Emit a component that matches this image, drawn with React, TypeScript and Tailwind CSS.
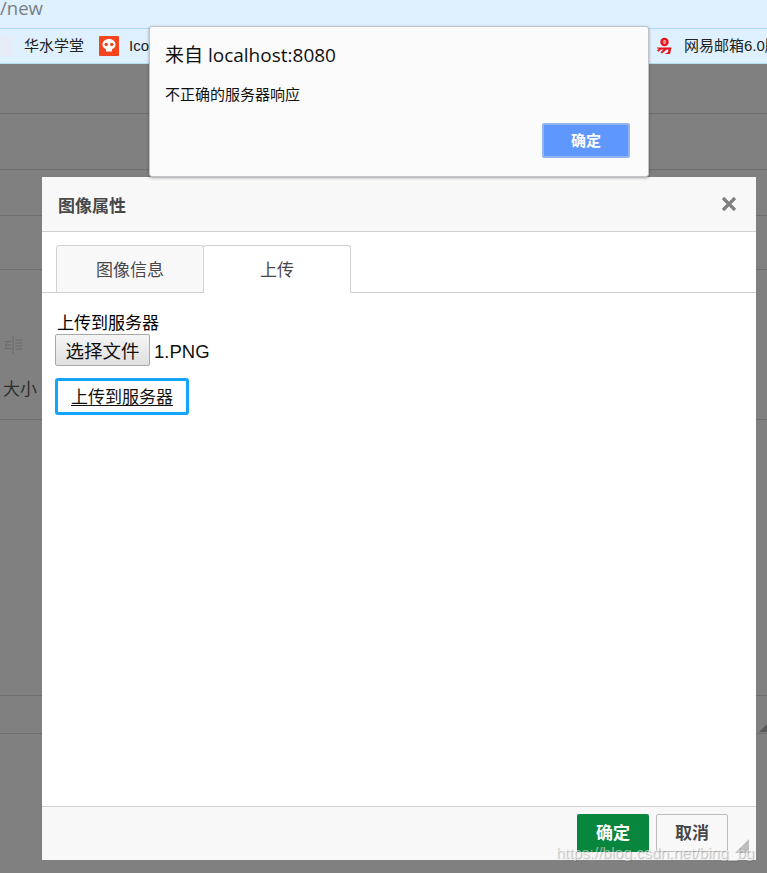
export default function App() {
  const cjk = "font-['Liberation_Sans','Noto_Sans_CJK_SC',sans-serif]";
  return (
    <div className={`relative w-[767px] h-[873px] overflow-hidden bg-[#808080] ${cjk}`}>
      {/* page behind the overlay */}
      <div className="h-[28px] bg-[#dff0fe] border-b border-[#a9dcf9] box-content">
        <div className="text-[18.5px] leading-[15px] text-[#7a7f85] font-['Open_Sans',sans-serif]">/new</div>
      </div>
      <div className="h-[35px] bg-[#dff0fe] border-b border-[#b5dcf5] flex items-center text-[15px] text-[#222]">
        <div className="w-[14px] h-[20px] bg-[#e6ecf8]" />
        <span className="ml-[10px]">华水学堂</span>
        <svg className="ml-[15px]" width="20" height="20" viewBox="0 0 20 20">
          <rect width="20" height="20" rx="1" fill="#f4451e" />
          <path d="M10 3c-4 0-6.500 2.500-6.500 5.500 0 2.500 1.500 4 3.500 4.700V15.500h6v-2.300c2-.7 3.500-2.200 3.500-4.700C16.500 5.500 14 3 10 3z" fill="#fff" />
          <circle cx="7.200" cy="8.500" r="1.700" fill="#f4451e" />
          <circle cx="12.800" cy="8.500" r="1.700" fill="#f4451e" />
        </svg>
        <span className="ml-[10px]">Icon</span>
        <div className="flex-1" />
        <svg width="17" height="18" viewBox="0 0 17 18" className="mr-[11px]">
          <circle cx="8.500" cy="5" r="4.200" fill="#e8141c" />
          <circle cx="8.500" cy="5" r="1.800" fill="#fff" />
          <path d="M5.500 5H11" stroke="#e8141c" strokeWidth="1" />
          <path d="M1 10.500h14.500l-1.500 6.500H8.500l3.500-1.800.5-2.700h-1.800L6 16.500l-1.500-1.200 3-2.800H5l-2.500 2.300L1 13.500l2-2H1z" fill="#e8141c" />
        </svg>
        <span className="w-[83px] whitespace-nowrap overflow-hidden">网易邮箱6.0版</span>
      </div>
      <div className="h-[50px] border-b border-[#6e6e6e]" />
      <div className="h-[56px] border-b border-[#6e6e6e]" />
      <div className="h-[46px] border-b border-[#6e6e6e]" />
      <div className="h-[54px] border-b border-[#6e6e6e]" />
      <div className="h-[150px] border-b border-[#6e6e6e] flex flex-col">
        <svg className="ml-[3px] mt-[65px]" width="21" height="20" viewBox="0 0 21 20" stroke="#6a6a6a" fill="none">
          <path d="M10 1v18M12.500 5h7M12.500 8h7M12.500 11h7M12.500 14h7M1 6.500h7M1 13.500h7M8 10H2M4.500 7.500L2 10l2.500 2.500" />
        </svg>
        <span className="ml-[3px] mt-[23px] text-[17px] leading-[24px] text-[#2f2f2f]">大小</span>
      </div>
      <div className="h-[276px] border-b border-[#6e6e6e]" />
      <div className="h-[38px] border-b border-[#6e6e6e] flex justify-end items-end">
        <div className="w-0 h-0 border-l-[8px] border-l-transparent border-b-[8px] border-b-[#5a5a5a] mb-[1px]" />
      </div>

      {/* image properties dialog */}
      <div className="absolute left-[42px] top-[177px] w-[714px] h-[683px] bg-white flex flex-col">
        <div className="h-[55px] shrink-0 bg-[#f8f8f8] border-b border-[#d1d1d1] flex items-center justify-between pl-[16px] pr-[19px]">
          <span className="text-[17px] leading-[24px] pt-[5px] font-bold text-[#484848]">图像属性</span>
          <svg width="16" height="16" viewBox="0 0 16 16" stroke="#808080" strokeWidth="3.200">
            <path d="M2 2l12 12M14 2L2 14" />
          </svg>
        </div>
        <div className="mt-[13px] h-[48px] shrink-0 border-b border-[#d1d1d1] flex pl-[14px]">
          <div className="w-[148px] h-[48px] bg-[#f8f8f8] border border-[#d1d1d1] rounded-t-[3px] flex items-center justify-center pt-[3px] text-[17px] text-[#484848]">
            图像信息
          </div>
          <div className="ml-[-1px] w-[148px] h-[48px] bg-white border border-b-0 border-[#d1d1d1] rounded-t-[3px] flex items-center justify-center pt-[2px] text-[17px] text-[#484848]">
            上传
          </div>
        </div>
        <div className="flex-1 pl-[14px] pt-[20px] text-black">
          <div className="text-[17px] leading-[21px] ml-[1px] whitespace-nowrap">上传到服务器</div>
          <div className="flex items-center ml-[-1px]">
            <div className="w-[95px] h-[32px] border border-[#a8a8a8] rounded-[2px] bg-gradient-to-b from-[#f5f5f5] to-[#e0e0e0] flex items-center justify-center pt-[3px] text-[18.500px] text-[#111] whitespace-nowrap">
              选择文件
            </div>
            <span className="ml-[4px] pt-[4px] text-[18.500px] leading-[24px] text-[#111]">1.PNG</span>
          </div>
          <div className="mt-[12px] ml-[-1px] w-[134px] h-[37px] border-[3px] border-[#13a4fb] rounded-[3px] bg-white flex items-center justify-center pt-[2px]">
            <span className="text-[17px] leading-[22px] text-[#111] underline underline-offset-[2px] whitespace-nowrap">上传到服务器</span>
          </div>
        </div>
        <div className="relative h-[54px] shrink-0 bg-[#f8f8f8] border-t border-[#d1d1d1] flex justify-end items-start gap-[7px] pt-[7px] pr-[28px]">
          <div className="w-[72px] h-[38px] bg-[#09863e] rounded-[2px] flex items-center justify-center pt-[1px] text-[17px] font-bold text-white">确定</div>
          <div className="w-[72px] h-[38px] border border-[#bcbcbc] rounded-[2px] flex items-center justify-center pt-[1px] text-[17px] font-bold text-[#484848]">取消</div>
          <div className="absolute right-[7px] bottom-[7px] w-0 h-0 border-l-[14px] border-l-transparent border-b-[14px] border-b-[#bdbdbd]" />
        </div>
      </div>

      {/* browser alert */}
      <div className="absolute left-[149px] top-[26px] w-[500px] h-[151px] bg-[#fbfbfb] border border-[#c0c4c8] rounded-[3px] shadow-[0_1px_3px_rgba(0,0,0,0.35)]">
        <div className="absolute left-[15px] top-[15px] text-[19px] leading-[26px] text-[#111] font-['Open_Sans','Noto_Sans_CJK_SC',sans-serif] whitespace-nowrap">来自 localhost:8080</div>
        <div className="absolute left-[15px] top-[58px] text-[15px] leading-[20px] text-[#111] whitespace-nowrap">不正确的服务器响应</div>
        <div className="absolute left-[392px] top-[96px] w-[88px] h-[35px] bg-[#5e97fe] border-2 border-[#94b4ec] rounded-[2px] flex items-center justify-center pt-[2px] text-[15px] font-bold text-white">确定</div>
      </div>

      {/* image watermark */}
      <div className="absolute left-[556px] top-[843px] text-[15.500px] leading-[20px] text-white/50 [text-shadow:1px_1px_1px_rgba(90,90,90,0.4)] whitespace-nowrap">https://blog.csdn.net/bing_bg</div>
    </div>
  );
}
